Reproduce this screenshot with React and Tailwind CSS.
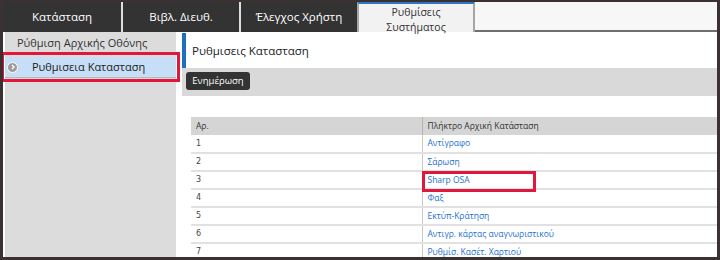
import React from 'react'

const TABS = ['Κατάσταση', 'Βιβλ. Διευθ.', 'Έλεγχος Χρήστη']

const ROWS = [
  ['1', 'Αντίγραφο'],
  ['2', 'Σάρωση'],
  ['3', 'Sharp OSA'],
  ['4', 'Φαξ'],
  ['5', 'Εκτύπ-Κράτηση'],
  ['6', 'Αντιγρ. κάρτας αναγνωριστικού'],
  ['7', 'Ρυθμίσ. Κασέτ. Χαρτιού'],
]

const font = { fontFamily: '"Open Sans", "Noto Sans", sans-serif' }

export default function App() {
  return (
    <div
      className="relative w-[720px] h-[260px] overflow-hidden border-x-[3px] border-t-[2px] border-b-[3px] border-[#3a3232] bg-white flex flex-col"
      style={font}
    >
      {/* tabs */}
      <div className="flex h-[30px] shrink-0">
        <div className="flex bg-[#333333]">
          {TABS.map((t, i) => (
            <div
              key={t}
              className={
                'h-full flex items-center justify-center text-white text-[11.5px] ' +
                (i === 0 ? 'w-[120px] border-r-2 border-[#dedede]' : i === 1 ? 'w-[118px] border-r-2 border-[#dedede]' : 'w-[116px]')
              }
            >
              {t}
            </div>
          ))}
        </div>
        <div className="w-[118px] h-full border-x-2 border-t-2 border-x-[#a5a5a5] border-t-[#2f74c0] bg-[#f2f2f2] flex flex-col items-center pt-px text-center text-[10.5px] leading-[14.5px] text-[#333]">
          <span>Ρυθμίσεις</span>
          <span>Συστήματος</span>
        </div>
        <div className="flex-1 bg-[#f7f7f7] border-b-2 border-[#6f6f6f]" />
      </div>

      {/* body */}
      <div className="flex flex-1 min-h-0">
        <div className="w-[173px] shrink-0 border-l-2 border-white bg-[#dcdcdc] pt-px">
          <div className="h-[22px] flex items-center pl-[12px] text-[11px] text-[#333] border-b-2 border-[#ececec]">
            Ρύθμιση Αρχικής Οθόνης
          </div>
          <div className="h-[21px] mt-[2px] flex items-center bg-[#c6def6] border-b border-[#b9b9b9] text-[11px] text-[#222]">
            <span className="ml-[2px] w-[11px] h-[11px] rounded-full bg-[#9d9d9d] border border-white flex items-center justify-center">
              <svg width="6" height="6" viewBox="0 0 6 6">
                <path d="M2 1 L4 3 L2 5" stroke="white" strokeWidth="1.3" fill="none" />
              </svg>
            </span>
            <span className="ml-[14px]">Ρυθμισεια Κατασταση</span>
          </div>
        </div>

        <div className="flex-1 pl-[6px] flex flex-col">
          <div className="h-[36px] shrink-0 flex items-stretch pt-px">
            <div className="w-[4px] bg-[#1f6fbf]" />
            <div className="flex items-center pl-[6px] text-[11.5px] text-[#222]">Ρυθμισεις Κατασταση</div>
          </div>
          <div className="h-[28px] shrink-0 bg-[#d9d9d9] flex items-center pl-[4px] pb-[2px]">
            <div className="h-[18px] w-[64px] rounded-[3px] bg-[#333333] text-white text-[9.5px] flex items-center justify-center">
              Ενημέρωση
            </div>
          </div>
          <div className="mt-[21px] ml-[9px]">
            <table className="w-full border-collapse text-[8.5px]">
              <thead>
                <tr className="h-[18px] bg-[#d5d5d5] text-[#333]">
                  <th className="w-[231px] text-left font-normal pl-[5px]">Αρ.</th>
                  <th className="text-left font-normal pl-[5px] border-l border-[#b5b5b5]">Πλήκτρο Αρχική Κατάσταση</th>
                </tr>
              </thead>
              <tbody>
                {ROWS.map(([n, name]) => (
                  <tr key={n} className="h-[18px] border-b-2 border-[#e1e1e1]">
                    <td className="pl-[5px] text-[#4a4540]" style={{ fontFamily: '"DejaVu Sans", sans-serif', fontSize: '8px' }}>
                      {n}
                    </td>
                    <td className="pl-[5px] border-l border-[#c8c8c8] text-[#1c6fd1]">{name}</td>
                  </tr>
                ))}
              </tbody>
            </table>
          </div>
        </div>
      </div>

      {/* highlight boxes */}
      <div className="absolute left-[-2px] top-[50px] w-[179px] h-[30px] border-[3px] border-[#e2173e]" />
      <div className="absolute left-[419px] top-[169px] w-[114px] h-[21px] border-[3px] border-[#e2173e]" />
    </div>
  )
}
